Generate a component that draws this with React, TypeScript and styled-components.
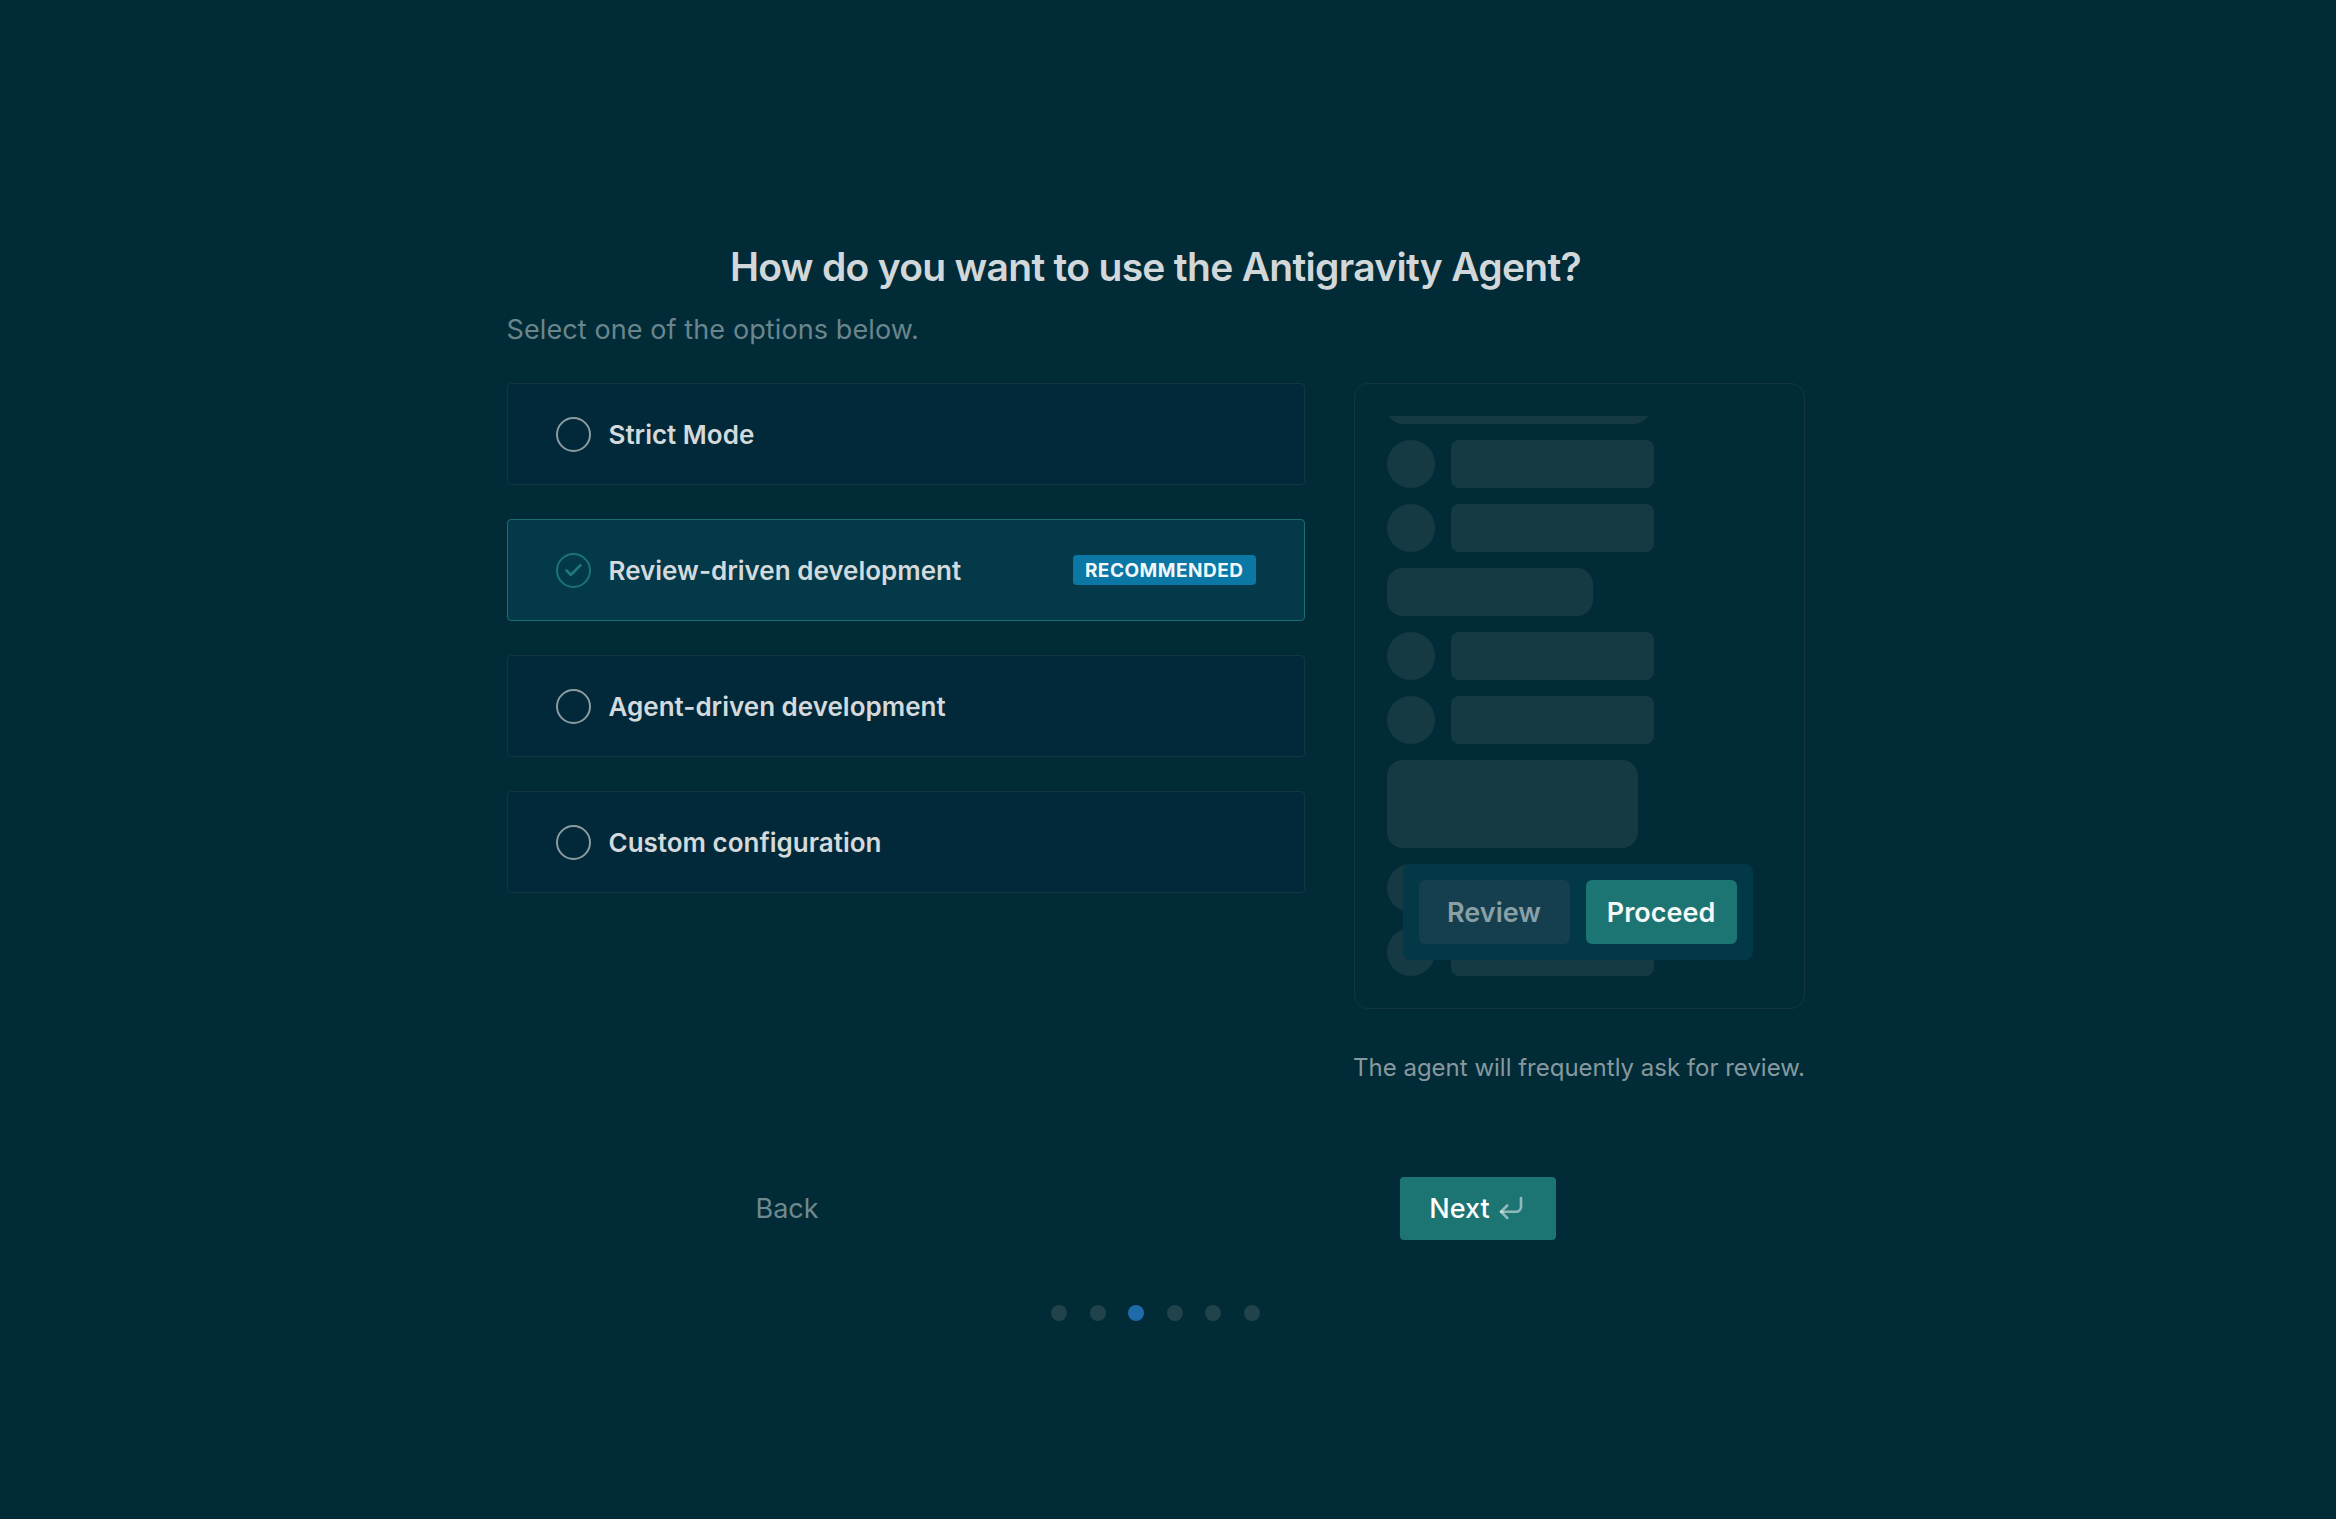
import React, { useState } from 'react';
import styled, { createGlobalStyle, css } from 'styled-components';
import { Check, CornerDownLeft } from 'lucide-react';

const GlobalStyle = createGlobalStyle`
	html,
	body {
		margin: 0;
		padding: 0;
		background: #022b38;
	}

	body {
		font-family: Inter, 'Noto Sans', 'Liberation Sans', sans-serif;
		-webkit-font-smoothing: antialiased;
	}
`;

const OPTIONS = [
	{ key: 'strict', label: 'Strict Mode' },
	{ key: 'review', label: 'Review-driven development', badge: 'RECOMMENDED' },
	{ key: 'agent', label: 'Agent-driven development' },
	{ key: 'custom', label: 'Custom configuration' },
];

// skeleton rows of the preview, top to bottom
const PREVIEW_ROWS: Array<'top' | 'line' | 'pill' | 'block'> = [
	'top',
	'line',
	'line',
	'pill',
	'line',
	'line',
	'block',
	'line',
	'line',
];

const App = () => {
	const [selected, setSelected] = useState('review');

	return (
		<Page>
			<GlobalStyle />
			<Main>
				<Title>How do you want to use the Antigravity Agent?</Title>
				<Subtitle>Select one of the options below.</Subtitle>

				<Body>
					<OptionList>
						{OPTIONS.map(({ key, label, badge }) => {
							const active = key === selected;
							return (
								<OptionCard key={key} $active={active} onClick={() => setSelected(key)}>
									<Radio $active={active}>
										{active && <Check size={21} strokeWidth={3} />}
									</Radio>
									<OptionLabel>{label}</OptionLabel>
									{badge && <Badge>{badge}</Badge>}
								</OptionCard>
							);
						})}
					</OptionList>

					<PreviewColumn>
						<PreviewPanel>
							<PreviewViewport>
								<PreviewList>
									{PREVIEW_ROWS.map((kind, i) =>
										kind === 'line' ? (
											<SkeletonRow key={i}>
												<SkeletonAvatar />
												<SkeletonBar />
											</SkeletonRow>
										) : (
											<SkeletonShape key={i} $kind={kind} />
										)
									)}
								</PreviewList>
								<ActionPopup>
									<PopupButton>Review</PopupButton>
									<PopupButton $primary>Proceed</PopupButton>
								</ActionPopup>
							</PreviewViewport>
						</PreviewPanel>
						<Caption>The agent will frequently ask for review.</Caption>
					</PreviewColumn>
				</Body>

				<Footer>
					<BackButton>Back</BackButton>
					<NextButton>
						Next
						<CornerDownLeft size={30} strokeWidth={2.1} />
					</NextButton>
				</Footer>

				<Dots>
					{[0, 1, 2, 3, 4, 5].map((i) => (
						<Dot key={i} $active={i === 2} />
					))}
				</Dots>
			</Main>
		</Page>
	);
};

const Page = styled.div`
	min-height: 1519px;
	display: flex;
	justify-content: center;
	padding-right: 25px;
	box-sizing: border-box;
`;

const Main = styled.div`
	width: 1298px;
	padding-top: 243px;
	display: flex;
	flex-direction: column;
	align-items: center;
`;

const Title = styled.h1`
	margin: 0;
	font-size: 39px;
	line-height: 48px;
	font-weight: 600;
	letter-spacing: -0.7px;
	color: #d2d8da;
`;

const Subtitle = styled.p`
	align-self: stretch;
	margin: 23px 0 0;
	font-size: 27px;
	line-height: 32px;
	font-weight: 400;
	letter-spacing: 0.1px;
	color: #6b858c;
`;

const Body = styled.div`
	align-self: stretch;
	margin-top: 37px;
	display: flex;
	gap: 49px;
`;

const OptionList = styled.div`
	width: 798px;
	display: flex;
	flex-direction: column;
	gap: 34px;
`;

const OptionCard = styled.div<{ $active: boolean }>`
	height: 102px;
	box-sizing: border-box;
	display: flex;
	align-items: center;
	padding: 0 48px;
	border-radius: 4px;
	border: 1.5px solid #15363f;
	background: #02293a;
	cursor: pointer;

	${(p) =>
		p.$active &&
		css`
			border-color: #1d6c70;
			background: #04394a;
		`}
`;

const Radio = styled.span<{ $active: boolean }>`
	width: 35px;
	height: 35px;
	box-sizing: border-box;
	flex: none;
	border-radius: 50%;
	border: 2.5px solid ${(p) => (p.$active ? '#1c7473' : '#8b9b9f')};
	color: #1f7a78;
	display: flex;
	align-items: center;
	justify-content: center;
`;

const OptionLabel = styled.span`
	margin-left: 18px;
	flex: 1;
	font-size: 26px;
	font-weight: 600;
	letter-spacing: 0px;
	color: #d4dadc;
`;

const Badge = styled.span`
	height: 30px;
	padding: 0 12px;
	display: flex;
	align-items: center;
	border-radius: 4px;
	background: #0a77a5;
	color: #f2f7f9;
	font-size: 19px;
	font-weight: 700;
	letter-spacing: 0.5px;
`;

const PreviewColumn = styled.div`
	width: 451px;
	display: flex;
	flex-direction: column;
	align-items: center;
`;

const PreviewPanel = styled.div`
	width: 100%;
	height: 626px;
	box-sizing: border-box;
	padding: 32px;
	border: 1.5px solid #15363f;
	border-radius: 14px;
`;

const PreviewViewport = styled.div`
	position: relative;
	height: 100%;
	overflow: hidden;
`;

const PreviewList = styled.div`
	margin-top: -40px;
	display: flex;
	flex-direction: column;
	gap: 16px;
`;

const skeleton = css`
	background: #163a44;
	flex: none;
`;

const SkeletonRow = styled.div`
	display: flex;
	gap: 16px;
`;

const SkeletonAvatar = styled.div`
	${skeleton};
	width: 48px;
	height: 48px;
	border-radius: 50%;
`;

const SkeletonBar = styled.div`
	${skeleton};
	width: 203px;
	height: 48px;
	border-radius: 8px;
`;

const SHAPES = {
	top: { width: 263, height: 48, radius: 16 },
	pill: { width: 206, height: 48, radius: 16 },
	block: { width: 251, height: 88, radius: 16 },
};

const SkeletonShape = styled.div<{ $kind: 'top' | 'pill' | 'block' }>`
	${skeleton};
	width: ${(p) => SHAPES[p.$kind].width}px;
	height: ${(p) => SHAPES[p.$kind].height}px;
	border-radius: ${(p) => SHAPES[p.$kind].radius}px;
`;

const ActionPopup = styled.div`
	position: absolute;
	left: 16px;
	top: 448px;
	width: 350px;
	height: 96px;
	box-sizing: border-box;
	padding: 16px;
	display: flex;
	gap: 16px;
	border-radius: 8px;
	background: #033847;
`;

const PopupButton = styled.div<{ $primary?: boolean }>`
	flex: 1;
	display: flex;
	align-items: center;
	justify-content: center;
	border-radius: 6px;
	font-size: 27px;
	font-weight: 600;
	background: ${(p) => (p.$primary ? '#1c7473' : '#153f4f')};
	color: ${(p) => (p.$primary ? '#f4f8f8' : '#88a0a6')};
`;

const Caption = styled.p`
	margin: 44px 0 0;
	font-size: 24px;
	line-height: 30px;
	color: #87999e;
	white-space: nowrap;
`;

const Footer = styled.div`
	width: 800px;
	margin-top: 94px;
	display: flex;
	align-items: center;
	justify-content: space-between;
`;

const BackButton = styled.button`
	padding: 0;
	border: none;
	background: none;
	font-family: inherit;
	font-size: 27px;
	font-weight: 400;
	color: #6f8990;
	cursor: pointer;
`;

const NextButton = styled.button`
	width: 156px;
	height: 63px;
	display: flex;
	align-items: center;
	justify-content: center;
	gap: 6px;
	border: none;
	border-radius: 4px;
	background: #1c7473;
	font-family: inherit;
	font-size: 27px;
	font-weight: 500;
	color: #ffffff;
	cursor: pointer;

	svg {
		color: rgba(255, 255, 255, 0.5);
		margin-top: -2px;
	}
`;

const Dots = styled.div`
	margin-top: 65px;
	display: flex;
	gap: 22.5px;
`;

const Dot = styled.span<{ $active: boolean }>`
	width: 16px;
	height: 16px;
	border-radius: 50%;
	background: ${(p) => (p.$active ? '#1f6aa8' : '#21434c')};
`;

export default App;
